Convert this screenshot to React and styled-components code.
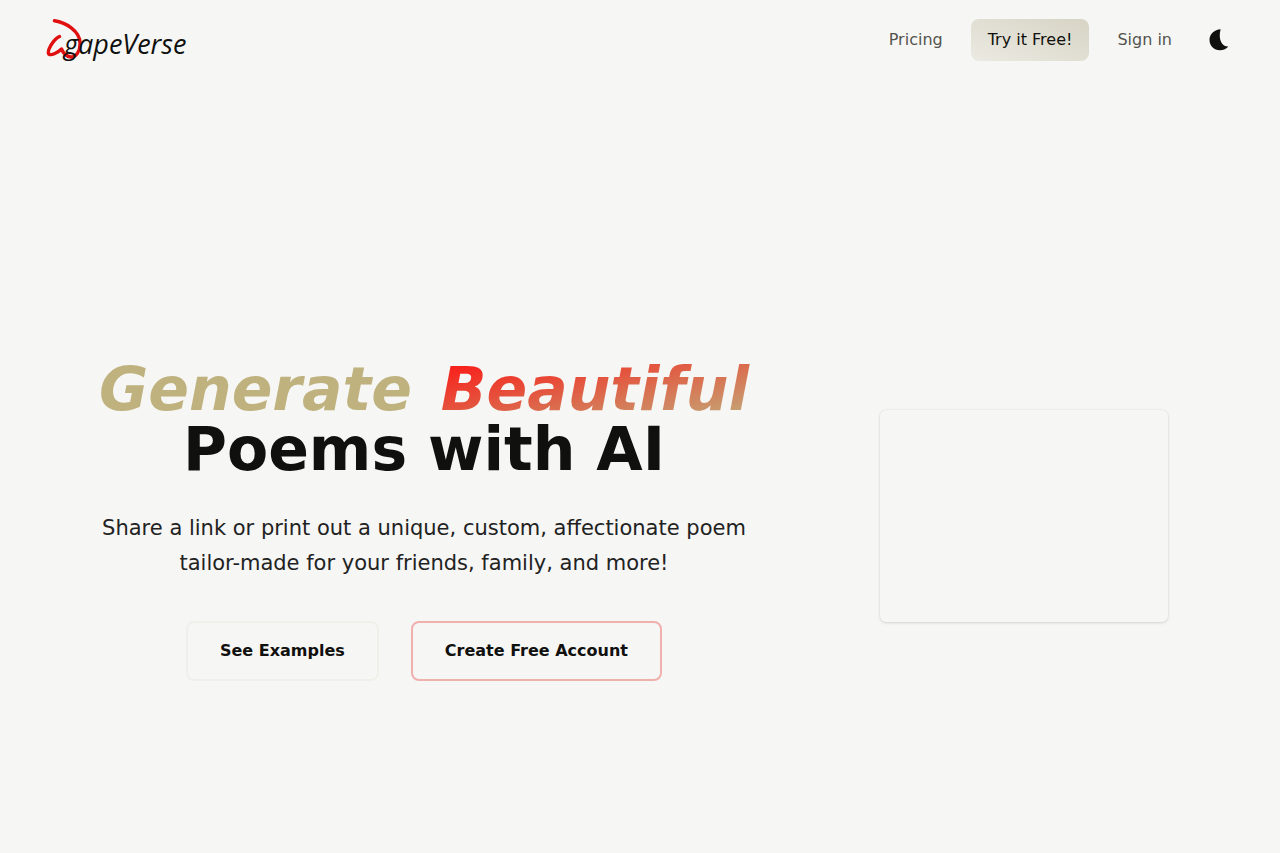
import React, { useState } from 'react';
import styled, { createGlobalStyle } from 'styled-components';

const App = () => {
  const [dark, setDark] = useState(false)

  return (
    <>
      <GlobalStyle />
      <Header>
        <Brand href="#" aria-label="WgapeVerse">
          <Mark viewBox="0 0 40 44" aria-hidden="true">
            <path d="M8.500 2.800 C20 4.500 34 13 34 25 C34.500 33 30 39.500 25 39 C20.500 38.500 17.500 36 15.500 31 C12 34.500 5.500 38 2.700 36 C1 33 6.500 22 13.500 18.500" />
          </Mark>
          <BrandName>gapeVerse</BrandName>
        </Brand>
        <Nav>
          <NavLink href="#pricing">Pricing</NavLink>
          <TryLink href="#try">Try it Free!</TryLink>
          <NavLink href="#signin">Sign in</NavLink>
          <ThemeButton type="button" aria-label="Toggle theme" onClick={() => setDark(!dark)}>
            <svg width="24" height="24" viewBox="0 0 24 24" fill="currentColor" aria-hidden="true">
              <path d="M12.600 1.200 C6.500 1.500 1.500 5.800 1.500 11.800 C1.500 18 6 22.300 11.800 22.300 C15.600 22.300 18.600 21 20.300 18.600 C14.500 18.800 9.800 12 12.600 1.200 Z" />
            </svg>
          </ThemeButton>
        </Nav>
      </Header>
      <Hero>
        <Copy>
          <Title>
            <Generate>Generate</Generate> <Beautiful>Beautiful</Beautiful>
            <br />
            Poems with AI
          </Title>
          <Lead>
            Share a link or print out a unique, custom, affectionate poem tailor-made for your
            friends, family, and more!
          </Lead>
          <Actions>
            <Button type="button" $border="#f0efe9">See Examples</Button>
            <Button type="button" $border="#efb0ae">Create Free Account</Button>
          </Actions>
        </Copy>
        <Preview />
      </Hero>
    </>
  )
}

export default App

const GlobalStyle = createGlobalStyle`
  * {
    box-sizing: border-box;
  }
  body {
    margin: 0;
    background-color: #f6f6f4;
    color: #10100e;
    font-family: "DejaVu Sans", sans-serif;
    font-size: 16px;
    line-height: 24px;
  }
`

const Header = styled.header`
  display: flex;
  align-items: center;
  justify-content: space-between;
  height: 80px;
  padding: 0 40px 0 46px;
`

const Brand = styled.a`
  display: flex;
  align-items: center;
  color: #10100e;
  text-decoration: none;
`

const Mark = styled.svg`
  width: 40px;
  height: 44px;
  margin-right: -22px;
  fill: none;
  stroke: #e01010;
  stroke-width: 3.4;
  stroke-linecap: round;
  stroke-linejoin: round;
`

const BrandName = styled.span`
  font-family: "Open Sans", sans-serif;
  font-size: 27px;
  font-style: italic;
  font-weight: 400;
  padding-top: 8px;
`

const Nav = styled.nav`
  display: flex;
  align-items: center;
  gap: 28px;
`

const NavLink = styled.a`
  color: #54544f;
  text-decoration: none;
`

const TryLink = styled.a`
  color: #10100e;
  text-decoration: none;
  padding: 9px 17px;
  border-radius: 8px;
  background-image: linear-gradient(to top right, #ebeae2, #d7d4c5);
`

const ThemeButton = styled.button`
  display: flex;
  padding: 8px;
  border: 0;
  background: none;
  color: #10100e;
  cursor: pointer;
`

const Hero = styled.main`
  display: grid;
  grid-template-columns: 15fr 8fr;
  gap: 48px;
  align-items: center;
  min-height: calc(100vh - 80px);
  padding: 98px 64px 0;
`

const Copy = styled.div`
  padding: 8px 24px 0;
  text-align: center;
`

const Title = styled.h1`
  margin: 0;
  font-size: 60px;
  line-height: 60px;
  font-weight: 700;
`

const Generate = styled.span`
  padding: 0 4px;
  font-style: italic;
  color: #bfb27e;
`

const Beautiful = styled.span`
  padding: 0 4px;
  font-style: italic;
  color: transparent;
  background-image: linear-gradient(to bottom right, #ff0f0f, #bfb27e);
  background-clip: text;
  -webkit-background-clip: text;
`

const Lead = styled.p`
  margin: 32px 0 40px;
  font-size: 21px;
  line-height: 35px;
  color: #22221f;
`

const Actions = styled.div`
  display: flex;
  justify-content: center;
  gap: 32px;
`

const Button = styled.button`
  padding: 16px 32px;
  border: 2px solid ${({ $border }) => $border};
  border-radius: 8px;
  background: transparent;
  color: #10100e;
  font-family: inherit;
  font-size: 16px;
  line-height: 24px;
  font-weight: 700;
  cursor: pointer;
`

const Preview = styled.div`
  margin: 0 48px;
  height: 212px;
  border-radius: 6px;
  box-shadow: 0 1px 3px rgba(0, 0, 0, 0.12), 0 0 2px rgba(0, 0, 0, 0.08);
  background-color: #f6f6f4;
`
